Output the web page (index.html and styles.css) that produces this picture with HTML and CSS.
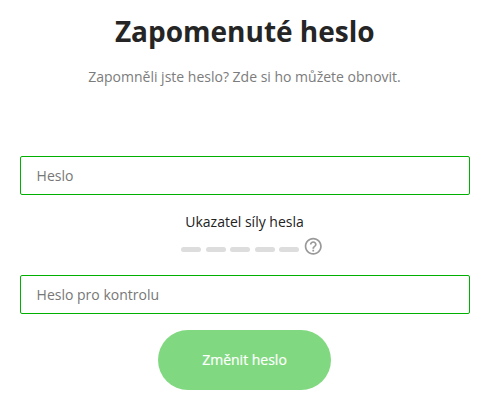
FILE: index.html
```html
<!DOCTYPE html>
<html lang="cs">
<head>
<meta charset="utf-8">
<title>Zapomenuté heslo</title>
<link rel="stylesheet" href="styles.css">
</head>
<body>
<main class="page">
  <h1 class="title">Zapomenuté heslo</h1>
  <p class="lead">Zapomněli jste heslo? Zde si ho můžete obnovit.</p>
  <form class="form">
    <input class="field" type="password" placeholder="Heslo">
    <div class="strength">
      <div class="strength-label">Ukazatel síly hesla</div>
      <div class="meter">
        <div class="bars"><span class="bar"></span><span class="bar"></span><span class="bar"></span><span class="bar"></span><span class="bar"></span></div>
        <svg class="help" viewBox="0 0 24 24"><path d="M11 18h2v-2h-2v2zm1-16C6.480 2 2 6.480 2 12s4.480 10 10 10 10-4.480 10-10S17.520 2 12 2zm0 18c-4.410 0-8-3.590-8-8s3.590-8 8-8 8 3.590 8 8-3.590 8-8 8zm0-14c-2.210 0-4 1.790-4 4h2c0-1.100.9-2 2-2s2 .9 2 2c0 2-3 1.750-3 5h2c0-2.250 3-2.500 3-5 0-2.210-1.790-4-4-4z"/></svg>
      </div>
    </div>
    <input class="field" type="password" placeholder="Heslo pro kontrolu">
    <button class="submit" type="button">Změnit heslo</button>
  </form>
</main>
</body>
</html>
```
FILE: styles.css
```css
* { box-sizing: border-box; }
body { margin: 0; background: #fff; font: 14px/20px "Open Sans", sans-serif; color: #222; }
.page { padding: 11px 20px 0; text-align: center; }
.title { margin: 0 0.5px 0 0; font-size: 28px; line-height: 40px; font-weight: 700; color: #252525; }
.lead { margin: 16px 1px 0 0; color: #7c7c7c; }
.form { display: flex; flex-direction: column; align-items: center; margin-top: 69px; }
.field { display: block; width: 100%; height: 39px; padding: 0 15.6px; border: 1px solid #00b000; border-radius: 2px; background: #fff; font: inherit; outline: none; }
.field::placeholder { color: #777; opacity: 1; }
.strength { width: 100%; height: 80px; padding-top: 17px; }
.strength-label { margin-right: 1px; }
.meter { display: flex; justify-content: center; align-items: flex-start; height: 20px; gap: 4px; margin-top: 4px; padding-left: 15.4px; }
.bars { display: flex; gap: 4.5px; padding-top: 11px; }
.bar { width: 20px; height: 5px; border-radius: 3px; background: #ddd; }
.help { width: 20.5px; height: 20.5px; fill: #999; }
.submit { width: 173px; height: 60px; margin: 16px 1px 0 0; padding: 0; border: 0; border-radius: 30px; background: #80d980; color: #fff; font: 500 14px/20px "Open Sans", sans-serif; -webkit-text-stroke: 0.2px #fff; }
```
